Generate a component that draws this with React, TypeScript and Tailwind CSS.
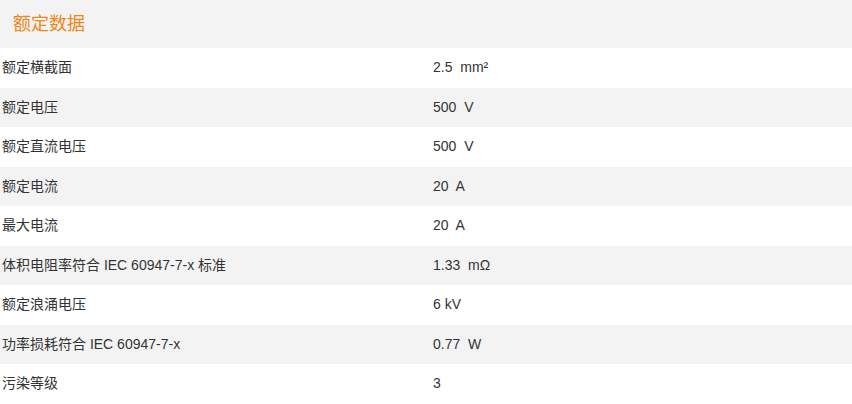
const rows: [string, string][] = [
  ["额定横截面", "2.5\u00a0 mm²"],
  ["额定电压", "500\u00a0 V"],
  ["额定直流电压", "500\u00a0 V"],
  ["额定电流", "20\u00a0 A"],
  ["最大电流", "20\u00a0 A"],
  ["体积电阻率符合 IEC 60947-7-x 标准", "1.33\u00a0 mΩ"],
  ["额定浪涌电压", "6 kV"],
  ["功率损耗符合 IEC 60947-7-x", "0.77\u00a0 W"],
  ["污染等级", "3"],
];

export default function App() {
  return (
    <div className="w-[852px] h-[404px] overflow-hidden bg-white font-['Liberation_Sans','Noto_Sans_CJK_SC',sans-serif] text-[#333]">
      <div className="h-12 bg-[#f3f3f3] flex items-center pl-[13px]">
        <h2 className="text-[18px] text-[#f28518] leading-none">额定数据</h2>
      </div>
      {rows.map(([label, value], i) => (
        <div
          key={label}
          className={`grid grid-cols-[431px_1fr] items-center h-[39.5px] text-[14px] ${
            i % 2 === 1 ? "bg-[#f3f3f3]" : "bg-white"
          }`}
        >
          <div className="pl-[2px]">{label}</div>
          <div className="pl-[2px]">{value}</div>
        </div>
      ))}
    </div>
  );
}
